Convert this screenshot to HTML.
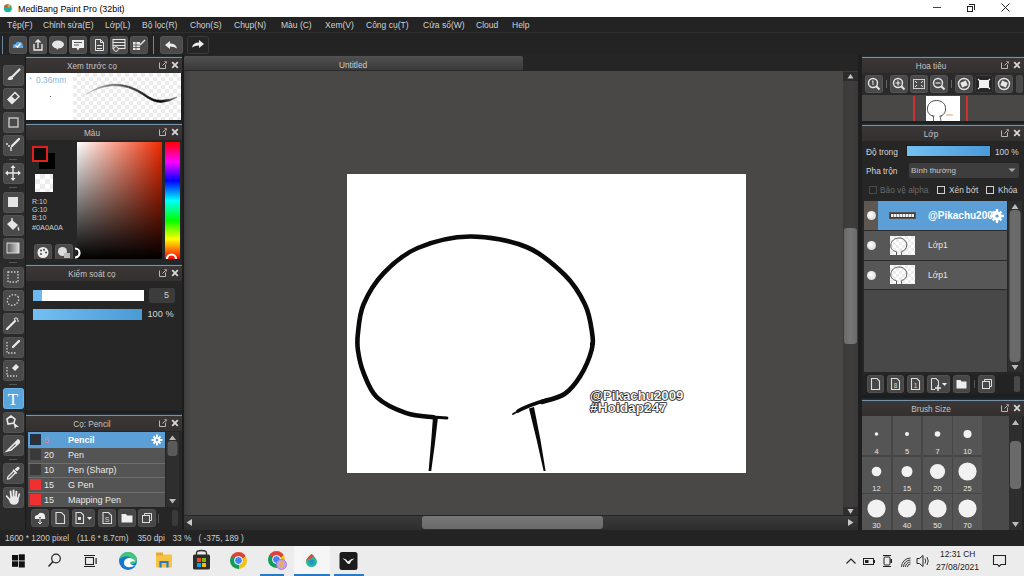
<!DOCTYPE html>
<html><head><meta charset="utf-8">
<style>
*{margin:0;padding:0;box-sizing:border-box}
html,body{width:1024px;height:576px;overflow:hidden;background:#232323;font-family:"Liberation Sans",sans-serif;position:relative}
.a{position:absolute}
.t{position:absolute;white-space:nowrap;line-height:1}
.tb{position:absolute;background:#484848;border-radius:2px}
.hdr{position:absolute;height:16px;background:linear-gradient(#3b3736,#34302f);border-top:1px solid #7893a8;box-shadow:0 -1px 0 #22303a,0 -2px 0 #1e262c;color:#c4c4c4;font-size:8.2px;text-align:center;line-height:17.5px;padding-right:24px}
.chk{background-color:#fff;background-image:linear-gradient(45deg,#ececec 25%,transparent 25%,transparent 75%,#ececec 75%),linear-gradient(45deg,#ececec 25%,transparent 25%,transparent 75%,#ececec 75%);background-size:8px 8px;background-position:0 0,4px 4px}
.btn{position:absolute;background:#4a4a4a;border-radius:3px}
</style></head><body>

<!-- title bar -->
<div class="a" style="left:0;top:0;width:1024px;height:17px;background:#fff"></div>
<svg class="a" style="left:3px;top:3px" width="10" height="10"><circle cx="4.8" cy="5.3" r="4" fill="#1fb58e"/><path d="M4.8 1.3 A4 4 0 0 0 0.9 4.5 L4.8 5.3Z" fill="#d85a3a"/><path d="M4.8 1.3 A4 4 0 0 1 8 3 L4.8 5.3Z" fill="#e9a443"/><circle cx="5.2" cy="6" r="1.8" fill="#2a9ad0" opacity="0.6"/></svg>
<div class="t" style="left:18px;top:5px;font-size:8.9px;color:#000">MediBang Paint Pro (32bit)</div>
<div class="a" style="left:933px;top:7px;width:8px;height:1px;background:#444"></div>
<div class="a" style="left:967px;top:6px;width:6px;height:6px;border:1px solid #222"></div>
<div class="a" style="left:969px;top:4px;width:6px;height:6px;border-top:1px solid #222;border-right:1px solid #222"></div>
<svg class="a" style="left:1001px;top:3px" width="9" height="9"><path d="M0.5 0.5L8.5 8.5M8.5 0.5L0.5 8.5" stroke="#222" stroke-width="1"/></svg>

<!-- menu bar -->
<div class="a" style="left:0;top:17px;width:1024px;height:16px;background:#232323;border-bottom:1px solid #2e2e2e"></div>
<div class="a" style="top:21px;font-size:8.5px;color:#d2d2d2;left:0;width:1024px;height:10px">
<span class="t" style="left:7px">Tệp(F)</span>
<span class="t" style="left:43px">Chỉnh sửa(E)</span>
<span class="t" style="left:105px">Lớp(L)</span>
<span class="t" style="left:142px">Bộ lọc(R)</span>
<span class="t" style="left:190px">Chọn(S)</span>
<span class="t" style="left:234px">Chụp(N)</span>
<span class="t" style="left:281px">Màu (C)</span>
<span class="t" style="left:325px">Xem(V)</span>
<span class="t" style="left:366px">Công cụ(T)</span>
<span class="t" style="left:423px">Cửa sổ(W)</span>
<span class="t" style="left:476px">Cloud</span>
<span class="t" style="left:512px">Help</span>
</div>

<!-- toolbar -->
<svg class="a" style="left:0;top:33px" width="220" height="22">
<rect x="2" y="3" width="1" height="18" fill="#6a88a0"/>
<g transform="translate(9,3)"><rect x="0.5" y="0.5" width="17" height="17" rx="2" fill="#4b4b4b" stroke="#555"/><path d="M4 12 Q3 8 6.5 8 Q7.5 5 10.5 6 Q14 6 13.5 9 Q15 10 14 12 Z" fill="#5ea8e6"/><path d="M6.5 9.5 L8.5 11 L11.5 7.5" stroke="#fff" stroke-width="1.3" fill="none"/></g>
<g transform="translate(29,3)"><rect x="0.5" y="0.5" width="17" height="17" rx="2" fill="#4b4b4b" stroke="#555"/><path d="M5 8 V14 H13 V8" fill="none" stroke="#eee" stroke-width="1.3"/><path d="M9 12 V4 M6.5 6.5 L9 4 L11.5 6.5" fill="none" stroke="#eee" stroke-width="1.3"/></g>
<g transform="translate(49,3)"><rect x="0.5" y="0.5" width="17" height="17" rx="2" fill="#4b4b4b" stroke="#555"/><ellipse cx="9" cy="8.5" rx="6" ry="4" fill="#e6e6e6"/><path d="M7 11 L8 14 L10 11Z" fill="#e6e6e6"/></g>
<g transform="translate(69,3)"><rect x="0.5" y="0.5" width="17" height="17" rx="2" fill="#4b4b4b" stroke="#555"/><rect x="3" y="4" width="12" height="8" fill="#eee"/><path d="M7.5 12 L9 14.5 L10.5 12Z" fill="#eee"/><path d="M5 6.5 H13 M5 9 H10" stroke="#555" stroke-width="1"/></g>
<g transform="translate(90,3)"><rect x="0.5" y="0.5" width="17" height="17" rx="2" fill="#4b4b4b" stroke="#555"/><path d="M5.5 3.5 H10.5 L13.5 6.5 V14.5 H5.5 Z M10.5 3.5 V6.5 H13.5" fill="none" stroke="#e6e6e6" stroke-width="1"/><path d="M7 9.5 H12 M7 12.5 H12" stroke="#e6e6e6" stroke-width="1"/></g>
<g transform="translate(110,3)"><rect x="0.5" y="0.5" width="17" height="17" rx="2" fill="#4b4b4b" stroke="#555"/><rect x="3" y="3.5" width="12" height="9" fill="none" stroke="#e6e6e6" stroke-width="1.1"/><path d="M3 6.5 H15 M3 9.5 H15" stroke="#e6e6e6" stroke-width="1"/><circle cx="6" cy="13" r="2.3" fill="#4b4b4b" stroke="#e6e6e6" stroke-width="1"/></g>
<g transform="translate(130,3)"><rect x="0.5" y="0.5" width="17" height="17" rx="2" fill="#4b4b4b" stroke="#555"/><path d="M3 6 H10 V14 H3Z" fill="#e6e6e6"/><path d="M3 9 H10 M3 11.5 H10 M6 6 V14" stroke="#4b4b4b" stroke-width="0.8"/><path d="M10 9 L15 4" stroke="#e6e6e6" stroke-width="1.4"/></g>
<rect x="153" y="3" width="1" height="18" fill="#6a88a0"/>
<g transform="translate(160,3)"><rect x="0.5" y="0.5" width="22" height="17" rx="2" fill="#4b4b4b" stroke="#555"/><path d="M5 9 L10 5 V7.5 Q16 7.5 17 12.5 Q14 10.5 10 10.5 V13 Z" fill="#eee"/></g>
<g transform="translate(187,3)"><rect x="0.5" y="0.5" width="21" height="17" rx="2" fill="#262626" stroke="#3c3c3c"/><path d="M17 8 L12 4 V6.5 Q6 6.5 5 11.5 Q8 9.5 12 9.5 V12 Z" fill="#eee"/></g>
</svg>

<!-- left tool column -->
<svg class="a" style="left:0;top:55px" width="26" height="475"><defs><linearGradient id="gr" x1="0" x2="1"><stop offset="0" stop-color="#555"/><stop offset="1" stop-color="#ddd"/></linearGradient></defs>
<rect x="0" y="0" width="26" height="475" fill="#2a2a2a"/><rect x="25" y="0" width="1" height="475" fill="#1a1a1a"/>
<g transform="translate(3,10)"><rect x="0.5" y="0.5" width="20" height="20" rx="2" fill="#4a4a4a" stroke="#535353" stroke-width="1"/><path d="M16.5 4.5 L9.5 11.5" stroke="#e8e8e8" stroke-width="2.2" stroke-linecap="round"/><path d="M4.5 14.5 Q5.5 11 8.5 11 Q10.5 12 10 14 Q8.5 15.8 4.5 14.5Z" fill="#e8e8e8"/></g>
<g transform="translate(3,33)"><rect x="0.5" y="0.5" width="20" height="20" rx="2" fill="#4a4a4a" stroke="#535353" stroke-width="1"/><path d="M12 4.5 L16 8.5 L9 15.5 L5 11.5 Z" fill="none" stroke="#e8e8e8" stroke-width="1.5"/><path d="M5 11.5 L8.5 8 L12.5 12 L9 15.5 Z" fill="#e8e8e8"/></g>
<g transform="translate(3,57)"><rect x="0.5" y="0.5" width="20" height="20" rx="2" fill="#4a4a4a" stroke="#535353" stroke-width="1"/><rect x="6" y="6" width="9" height="9" fill="none" stroke="#d0d0d0" stroke-width="1.3"/></g>
<g transform="translate(3,80)"><rect x="0.5" y="0.5" width="20" height="20" rx="2" fill="#4a4a4a" stroke="#535353" stroke-width="1"/><path d="M16 4 L9 11" stroke="#e8e8e8" stroke-width="2.4" stroke-linecap="round"/><circle cx="4" cy="9" r="1" fill="#ddd"/><circle cx="6" cy="11" r="1" fill="#ddd"/><circle cx="8" cy="13" r="1" fill="#ddd"/><circle cx="8" cy="15" r="1" fill="#ddd"/></g>
<g transform="translate(3,108)"><rect x="0.5" y="0.5" width="20" height="20" rx="2" fill="#4a4a4a" stroke="#535353" stroke-width="1"/><path d="M10 3 V17 M3 10 H17" stroke="#e8e8e8" stroke-width="1.4"/><path d="M10 2 L7.5 5 H12.5Z M10 18 L7.5 15 H12.5Z M2 10 L5 7.5 V12.5Z M18 10 L15 7.5 V12.5Z" fill="#e8e8e8"/></g>
<g transform="translate(3,137)"><rect x="0.5" y="0.5" width="20" height="20" rx="2" fill="#4a4a4a" stroke="#535353" stroke-width="1"/><rect x="5" y="5" width="10" height="10" fill="#e4e4e4"/></g>
<g transform="translate(3,160)"><rect x="0.5" y="0.5" width="20" height="20" rx="2" fill="#4a4a4a" stroke="#535353" stroke-width="1"/><path d="M4 9 L9 5 L15 10 L10 15 Z" fill="#e8e8e8"/><path d="M9 3 V7" stroke="#e8e8e8" stroke-width="1.4"/><path d="M15 11 Q17 14 16 16 Q14 15 15 11Z" fill="#e8e8e8"/></g>
<g transform="translate(3,183)"><rect x="0.5" y="0.5" width="20" height="20" rx="2" fill="#4a4a4a" stroke="#535353" stroke-width="1"/><rect x="4" y="5" width="12" height="10" fill="url(#gr)" stroke="#ddd" stroke-width="1"/></g>
<g transform="translate(3,212)"><rect x="0.5" y="0.5" width="20" height="20" rx="2" fill="#4a4a4a" stroke="#535353" stroke-width="1"/><rect x="5" y="5" width="10" height="10" fill="none" stroke="#cfcfcf" stroke-width="1.3" stroke-dasharray="1.5 1.5"/></g>
<g transform="translate(3,235)"><rect x="0.5" y="0.5" width="20" height="20" rx="2" fill="#4a4a4a" stroke="#535353" stroke-width="1"/><ellipse cx="10" cy="10" rx="6" ry="5" transform="rotate(-35 10 10)" fill="none" stroke="#cfcfcf" stroke-width="1.3" stroke-dasharray="1.5 1.5"/></g>
<g transform="translate(3,258)"><rect x="0.5" y="0.5" width="20" height="20" rx="2" fill="#4a4a4a" stroke="#535353" stroke-width="1"/><path d="M4 16 L12 8" stroke="#e8e8e8" stroke-width="2.2" stroke-linecap="round"/><path d="M13 4 V6 M15 5 L14 7 M16 8 H14 M11 5 L12 7" stroke="#e8e8e8" stroke-width="1"/></g>
<g transform="translate(3,282)"><rect x="0.5" y="0.5" width="20" height="20" rx="2" fill="#4a4a4a" stroke="#535353" stroke-width="1"/><path d="M16 4 L10 10" stroke="#e8e8e8" stroke-width="2.4" stroke-linecap="round"/><path d="M4 5 V16 H14" fill="none" stroke="#cfcfcf" stroke-width="1.3" stroke-dasharray="1.5 1.5"/></g>
<g transform="translate(3,305)"><rect x="0.5" y="0.5" width="20" height="20" rx="2" fill="#4a4a4a" stroke="#535353" stroke-width="1"/><path d="M9 8 L13 4 L16 7 L12 11 Z" fill="#e8e8e8"/><path d="M4 7 V16 H14" fill="none" stroke="#cfcfcf" stroke-width="1.3" stroke-dasharray="1.5 1.5"/></g>
<g transform="translate(3,333)"><rect x="0.5" y="0.5" width="20" height="20" rx="2" fill="#5aa5dc" stroke="#6cb4e8" stroke-width="1"/><text x="10" y="17" text-anchor="middle" font-family="Liberation Serif" font-size="17" fill="#fff">T</text></g>
<g transform="translate(3,357)"><rect x="0.5" y="0.5" width="20" height="20" rx="2" fill="#4a4a4a" stroke="#535353" stroke-width="1"/><path d="M4 7 L8 4 L12 7 L11 11 L5 12 Z" fill="none" stroke="#e8e8e8" stroke-width="1.6"/><path d="M10 10 L16 15 L13 15 L12 17 Z" fill="#e8e8e8"/></g>
<g transform="translate(3,380)"><rect x="0.5" y="0.5" width="20" height="20" rx="2" fill="#4a4a4a" stroke="#535353" stroke-width="1"/><path d="M4 16 L15 5 Q17 6 16 8 L8 15 Z" fill="none" stroke="#e8e8e8" stroke-width="1.6"/><path d="M12 8 L15 5 Q17 6 16 8 L13 11Z" fill="#e8e8e8"/></g>
<g transform="translate(3,408)"><rect x="0.5" y="0.5" width="20" height="20" rx="2" fill="#4a4a4a" stroke="#535353" stroke-width="1"/><path d="M4.5 16 L4.8 14 L11 7.8 L12.7 9.5 L6.5 15.7 Z" fill="none" stroke="#e8e8e8" stroke-width="1.3" stroke-linejoin="round"/><path d="M12.5 6.5 L14.5 4.5 Q16 4 16 5.5 L14 7.5Z" fill="#e8e8e8" stroke="#e8e8e8" stroke-width="1.2"/><path d="M10 6.8 L13.7 10.5" stroke="#e8e8e8" stroke-width="1.6"/></g>
<g transform="translate(3,432)"><rect x="0.5" y="0.5" width="20" height="20" rx="2" fill="#4a4a4a" stroke="#535353" stroke-width="1"/><g stroke="#e8e8e8" stroke-linecap="round" fill="none"><path d="M6.5 12.5 L3.8 9.2" stroke-width="1.8"/><path d="M8.2 10.5 L7.6 4.5" stroke-width="1.9"/><path d="M10.6 10 L10.6 3.5" stroke-width="1.9"/><path d="M13 10.5 L13.4 4.6" stroke-width="1.9"/><path d="M15 11.5 L16.3 7" stroke-width="1.7"/></g><ellipse cx="11" cy="13.5" rx="4.8" ry="4.2" fill="#e8e8e8"/></g>
<rect x="9" y="104" width="8" height="1" fill="#555"/>
<rect x="9" y="132" width="8" height="1" fill="#555"/>
<rect x="9" y="207" width="8" height="1" fill="#555"/>
<rect x="9" y="329" width="8" height="1" fill="#555"/>
<rect x="9" y="404" width="8" height="1" fill="#555"/>
</svg>

<!-- left panels -->
<div class="a" style="left:26px;top:55px;width:157px;height:475px;background:#232323"></div>
<div class="a" style="left:181px;top:55px;width:3px;height:475px;background:#1c1c1c"></div>
<!-- brush preview -->
<div class="hdr" style="left:26px;top:57px;width:156px">Xem trước cọ</div>
<svg class="a" style="left:158px;top:60px" width="22" height="10"><path d="M1.5 2.5 V8.5 H7.5 V4.5" fill="none" stroke="#b8b8b8" stroke-width="1"/><path d="M4.5 5.5 L7.5 2.5" stroke="#b8b8b8" stroke-width="1"/><path d="M6 1.2 H8.8 V4Z" fill="#c9a8a8"/><path d="M14.2 2.2 L19.8 7.8 M19.8 2.2 L14.2 7.8" stroke="#d8d8d8" stroke-width="1.8"/></svg>
<div class="a" style="left:26px;top:73px;width:47px;height:47px;background:#fff"></div>
<div class="t" style="left:29px;top:76px;font-size:7px;color:#8ab4dc">*</div><div class="t" style="left:36px;top:76px;font-size:8.4px;color:#8ab4dc">0.36mm</div>
<div class="a" style="left:50px;top:96px;width:1px;height:1px;background:#555"></div>
<div class="a chk" style="left:73px;top:73px;width:108px;height:47px"></div>
<svg class="a" style="left:73px;top:73px" width="108" height="47"><defs><linearGradient id="bp" x1="0" x2="1"><stop offset="0" stop-color="#bbb"/><stop offset="0.45" stop-color="#444"/><stop offset="0.8" stop-color="#000"/><stop offset="1" stop-color="#777"/></linearGradient></defs><path d="M13 21.5 Q26 13.5 40 12.6 Q56 12.4 70 22 Q80 29.5 88 29.5 Q97 29 104 24 Q97 27 88 27.3 Q80 27.5 71 20.5 Q56 10.5 40 11.2 Q26 12 13 21.5Z" fill="url(#bp)" stroke="url(#bp)" stroke-width="0.6"/></svg>
<div class="a" style="left:26px;top:120px;width:156px;height:4px;background:#1e1e1e"></div>

<!-- color -->
<div class="hdr" style="left:26px;top:124px;width:156px">Màu</div>
<svg class="a" style="left:158px;top:127px" width="22" height="10"><path d="M1.5 2.5 V8.5 H7.5 V4.5" fill="none" stroke="#b8b8b8" stroke-width="1"/><path d="M4.5 5.5 L7.5 2.5" stroke="#b8b8b8" stroke-width="1"/><path d="M6 1.2 H8.8 V4Z" fill="#c9a8a8"/><path d="M14.2 2.2 L19.8 7.8 M19.8 2.2 L14.2 7.8" stroke="#d8d8d8" stroke-width="1.8"/></svg>
<div class="a" style="left:26px;top:140px;width:156px;height:123px;background:#262626"></div>
<div class="a" style="left:39px;top:153px;width:16px;height:16px;background:#000"></div>
<div class="a" style="left:32px;top:146px;width:16px;height:16px;background:#0a0a0a;border:2px solid #e0201c"></div>
<div class="a chk" style="left:35px;top:174px;width:18px;height:18px;background-size:10px 10px;background-position:0 0,5px 5px"></div>
<div class="t" style="left:32px;top:198px;font-size:7px;color:#cfcfcf;line-height:8px">R:10<br>G:10<br>B:10</div>
<div class="t" style="left:32px;top:224px;font-size:7.3px;color:#cfcfcf">#0A0A0A</div>
<div class="a" style="left:77px;top:142px;width:85px;height:117px;background:linear-gradient(to bottom,rgba(0,0,0,0),#000),linear-gradient(to right,#fff,#f02a00)"></div>
<div class="a" style="left:165px;top:142px;width:15px;height:117px;background:linear-gradient(#ff0000 0%,#ff00ff 17%,#0000ff 33%,#00ffff 50%,#00ff00 67%,#ffff00 83%,#ff0000 100%)"></div>
<svg class="a" style="left:72px;top:246px" width="110" height="14"><path d="M3 2.5 A4.5 4.5 0 0 1 3 11.5" fill="none" stroke="#fff" stroke-width="2.2"/><path d="M95 13 A4.5 4.5 0 0 1 104 13" fill="none" stroke="#fff" stroke-width="2.2"/></svg>
<svg class="a" style="left:33.5px;top:243.5px" width="40" height="18">
<rect x="0.5" y="0.5" width="17" height="16" rx="2" fill="#4a4a4a" stroke="#555"/><circle cx="9" cy="8.5" r="5.5" fill="#eee"/><circle cx="7" cy="6.5" r="1" fill="#4a4a4a"/><circle cx="10" cy="5.8" r="1" fill="#4a4a4a"/><circle cx="12" cy="8.5" r="1" fill="#4a4a4a"/><circle cx="7" cy="10" r="1" fill="#4a4a4a"/>
<g transform="translate(21,0)"><rect x="0.5" y="0.5" width="17" height="16" rx="2" fill="#4a4a4a" stroke="#555"/><circle cx="7.5" cy="7.5" r="4.5" fill="#ddd"/><rect x="9" y="9" width="6" height="5" fill="#bbb"/></g>
</svg>
<div class="a" style="left:26px;top:259px;width:156px;height:6px;background:#262626"></div>

<!-- brush control -->
<div class="hdr" style="left:26px;top:265px;width:156px">Kiểm soát cọ</div>
<svg class="a" style="left:158px;top:268px" width="22" height="10"><path d="M1.5 2.5 V8.5 H7.5 V4.5" fill="none" stroke="#b8b8b8" stroke-width="1"/><path d="M4.5 5.5 L7.5 2.5" stroke="#b8b8b8" stroke-width="1"/><path d="M6 1.2 H8.8 V4Z" fill="#c9a8a8"/><path d="M14.2 2.2 L19.8 7.8 M19.8 2.2 L14.2 7.8" stroke="#d8d8d8" stroke-width="1.8"/></svg>
<div class="a" style="left:26px;top:281px;width:156px;height:130px;background:#262626"></div>
<div class="a" style="left:33px;top:290px;width:111px;height:11px;background:#fff"></div>
<div class="a" style="left:33px;top:290px;width:9px;height:11px;background:#6fb8ee"></div>
<div class="a" style="left:149px;top:288px;width:26px;height:15px;background:#3c3c3c;border-radius:2px"></div>
<div class="t" style="left:164px;top:291px;font-size:9px;color:#cfcfcf">5</div>
<div class="a" style="left:33px;top:309px;width:109px;height:11px;background:linear-gradient(to right,#72bff2,#4a9ad6)"></div>
<div class="t" style="left:147.5px;top:309.5px;font-size:9.2px;color:#d6d6d6">100 %</div>
<div class="a" style="left:26px;top:411px;width:156px;height:4px;background:#1e1e1e"></div>

<!-- brush list -->
<div class="hdr" style="left:26px;top:415px;width:156px">Cọ: Pencil</div>
<svg class="a" style="left:158px;top:418px" width="22" height="10"><path d="M1.5 2.5 V8.5 H7.5 V4.5" fill="none" stroke="#b8b8b8" stroke-width="1"/><path d="M4.5 5.5 L7.5 2.5" stroke="#b8b8b8" stroke-width="1"/><path d="M6 1.2 H8.8 V4Z" fill="#c9a8a8"/><path d="M14.2 2.2 L19.8 7.8 M19.8 2.2 L14.2 7.8" stroke="#d8d8d8" stroke-width="1.8"/></svg>
<div class="a" style="left:26px;top:431px;width:156px;height:99px;background:#262626"></div>
<div class="a" style="left:28px;top:432px;width:137px;height:75px;background:#545454"></div>
<div class="a" style="left:28px;top:432px;width:137px;height:16px;background:#5b9fd6"></div>
<div class="a" style="left:28px;top:463px;width:137px;height:1px;background:#6e6e6e"></div>
<div class="a" style="left:28px;top:477px;width:137px;height:1px;background:#6e6e6e"></div>
<div class="a" style="left:28px;top:492px;width:137px;height:1px;background:#6e6e6e"></div>
<div class="a" style="left:30px;top:434px;width:11px;height:11px;background:#303030;border:1px solid #1a3550"></div>
<div class="a" style="left:30px;top:449px;width:11px;height:11px;background:#3a3a3a"></div>
<div class="a" style="left:30px;top:464px;width:11px;height:11px;background:#3a3a3a"></div>
<div class="a" style="left:30px;top:479px;width:11px;height:11px;background:#f03030"></div>
<div class="a" style="left:30px;top:494px;width:11px;height:11px;background:#f03030"></div>
<div class="a" style="top:435.5px;left:0;width:182px;font-size:9px;color:#e8e8e8;height:70px">
<span class="t" style="left:44px;top:0;color:#e88080">5</span><span class="t" style="left:68px;top:0;font-weight:bold;color:#fff">Pencil</span>
<span class="t" style="left:44px;top:15px">20</span><span class="t" style="left:68px;top:15px">Pen</span>
<span class="t" style="left:44px;top:30px">10</span><span class="t" style="left:68px;top:30px">Pen (Sharp)</span>
<span class="t" style="left:44px;top:45px">15</span><span class="t" style="left:68px;top:45px">G Pen</span>
<span class="t" style="left:44px;top:60px">15</span><span class="t" style="left:68px;top:60px">Mapping Pen</span>
</div>
<svg class="a" style="left:151px;top:434px" width="12" height="12"><g fill="#fff"><circle cx="6" cy="6" r="3.2"/><path d="M5 0.5H7L7 3H5Z M5 9H7V11.5H5Z M0.5 5V7H3V5Z M9 5V7H11.5V5Z M1.8 3.2L3.2 1.8L4.8 3.4L3.4 4.8Z M7.2 8.6L8.6 7.2L10.2 8.8L8.8 10.2Z M1.8 8.8L3.4 7.2L4.8 8.6L3.2 10.2Z M7.2 3.4L8.8 1.8L10.2 3.2L8.6 4.8Z"/></g><circle cx="6" cy="6" r="1.3" fill="#5b9fd6"/></svg>
<div class="a" style="left:166px;top:432px;width:13px;height:75px;background:#2e2e2e"></div>
<svg class="a" style="left:166px;top:432px" width="13" height="75"><path d="M3 8 L6.5 3.5 L10 8Z" fill="#bbb"/><rect x="1.5" y="9" width="10" height="15" rx="3" fill="#5a5a5a"/><path d="M3 67 L6.5 71.5 L10 67Z" fill="#bbb"/></svg>
<svg class="a" style="left:28px;top:508px" width="154" height="20">
<g transform="translate(3,1)"><rect x="0.5" y="0.5" width="17" height="17" rx="2" fill="#474747" stroke="#505050"/><path d="M4 10 Q3 6 7 6 Q8 3 11 4 Q14 4 14 8 Q15 10 13 10Z" fill="#eee"/><path d="M9 8 V15 M6.5 12.5 L9 15 L11.5 12.5" stroke="#474747" stroke-width="1.5" fill="none"/><path d="M9 9 V15 M7 13 L9 15 L11 13" stroke="#eee" stroke-width="1" fill="none"/></g>
<g transform="translate(23,1)"><rect x="0.5" y="0.5" width="17" height="17" rx="2" fill="#474747" stroke="#505050"/><path d="M5 3.5 H10.5 L13.5 6.5 V14.5 H5Z" fill="none" stroke="#ddd" stroke-width="1.1"/></g>
<g transform="translate(44,1)"><rect x="0.5" y="0.5" width="22" height="17" rx="2" fill="#474747" stroke="#505050"/><path d="M4 3.5 H9 L11.5 6 V14.5 H4Z" fill="none" stroke="#ddd" stroke-width="1.1"/><rect x="6" y="8" width="3" height="3" fill="#ddd"/><path d="M15 8 L17.5 11 L20 8Z" fill="#eee"/></g>
<g transform="translate(70,1)"><rect x="0.5" y="0.5" width="17" height="17" rx="2" fill="#474747" stroke="#505050"/><path d="M5 3.5 H10.5 L13.5 6.5 V14.5 H5Z" fill="none" stroke="#ddd" stroke-width="1.1"/><text x="9" y="12.5" font-size="7" fill="#ddd" text-anchor="middle" font-family="Liberation Sans">S</text></g>
<g transform="translate(90,1)"><rect x="0.5" y="0.5" width="17" height="17" rx="2" fill="#474747" stroke="#505050"/><path d="M3.5 5 H8 L9 6.5 H14.5 V13.5 H3.5Z" fill="#eee"/></g>
<g transform="translate(110,1)"><rect x="0.5" y="0.5" width="17" height="17" rx="2" fill="#474747" stroke="#505050"/><rect x="4.5" y="6.5" width="7" height="7" fill="none" stroke="#ddd"/><path d="M6.5 6.5 V4.5 H13.5 V11.5 H11.5" fill="none" stroke="#ddd"/></g>
<rect x="130" y="6" width="1" height="9" fill="#555"/>
<rect x="144" y="2" width="6" height="16" rx="2" fill="#3a3a3a"/>
</svg>

<!-- canvas column -->
<div class="a" style="left:184px;top:55px;width:678px;height:16px;background:#252525"></div>
<div class="a" style="left:184px;top:56px;width:339px;height:15px;background:linear-gradient(#515151,#434343 60%,#3a3a3a);border-radius:2px 2px 0 0;border-bottom:1px solid #2a2a2a"></div>
<div class="t" style="left:339px;top:61px;font-size:8.3px;color:#cfcfcf">Untitled</div>
<div class="a" style="left:184px;top:71px;width:659px;height:444px;background:#4a4846"></div>
<div class="a" style="left:184px;top:71px;width:7px;height:444px;background:linear-gradient(to right,#3c3c3c,#444 60%,#484746)"></div>
<div class="a" style="left:843px;top:71px;width:15px;height:444px;background:linear-gradient(to right,#3c3a39,#403e3d 50%,#3a3838)"></div>
<div class="a" style="left:844px;top:228px;width:13px;height:116px;background:linear-gradient(to right,#6a6a6a,#767676 50%,#6a6a6a);border-radius:3px"></div>
<svg class="a" style="left:843px;top:71px" width="15" height="444"><rect x="0" y="1" width="15" height="9" fill="#2c2c2c"/><path d="M4.5 7.5 L7.5 3 L10.5 7.5Z" fill="#c8c8c8"/><rect x="0" y="436" width="15" height="8" fill="#2e2e2e"/><path d="M4.5 438 L7.5 443 L10.5 438Z" fill="#c8c8c8"/></svg>
<div class="a" style="left:184px;top:515px;width:674px;height:15px;background:linear-gradient(#3a3a3a,#2d2d2d);border-top:1px solid #262626"></div>
<div class="a" style="left:422px;top:516px;width:181px;height:13px;background:linear-gradient(#777,#6a6a6a);border-radius:3px"></div>
<svg class="a" style="left:184px;top:515px" width="674" height="15"><path d="M8 4 L2.5 7.5 L8 11Z" fill="#c8c8c8"/><path d="M664 4 L669.5 7.5 L664 11Z" fill="#c8c8c8"/></svg>
<div class="a" style="left:347px;top:174px;width:399px;height:299px;background:#fff"></div>
<svg class="a" style="left:347px;top:174px" width="399" height="299" viewBox="347 174 399 299">
<g fill="none" stroke="#0a0a0a" stroke-linecap="round">
<path d="M433.5 417.3 C429.0 416.6 415.8 416.5 406.4 413.2 C397.0 409.9 384.1 404.2 377 397.4 C369.9 390.6 366.7 380.5 363.5 372.6 C360.3 364.7 358.8 356.5 357.9 350 C357.0 343.5 357.0 341.4 357.9 333.8 C358.8 326.2 359.2 314.6 363.5 304.5 C367.8 294.4 374.9 282.3 383.9 272.9 C392.9 263.5 403.3 254.1 417.7 248 C432.1 241.9 451.9 236.7 470 236.5 C488.1 236.3 510.6 240.6 526.4 247 C542.2 253.4 555.0 265.4 564.8 275 C574.6 284.6 580.5 295.1 585 304.5 C589.5 313.9 590.8 324.0 591.9 331.6 C593.0 339.2 593.5 342.6 591.6 350 C589.7 357.4 584.8 368.7 580.3 376 C575.8 383.3 570.9 389.7 564.5 394 C558.1 398.3 545.7 400.7 541.9 402" stroke-width="4.6"/>
<path d="M425 416.5 L447 418" stroke-width="2.8"/>
<rect x="590" y="342.5" width="3.4" height="8" fill="#0a0a0a" stroke="none"/>
<path d="M548 399.5 C536 403 525 407 518 411" stroke-width="3.6"/><path d="M522 409 L513 414" stroke-width="1.8"/>
<path d="M433 417 L438 417 Q435 445 431.2 471 L428.6 471 Q431 445 433 417Z" fill="#0a0a0a" stroke="none"/>
<path d="M529 408.5 L534 407 Q541 440 545.6 471 L543.6 471 Q537 440 529 408.5Z" fill="#0a0a0a" stroke="none"/>
</g>
</svg>
<svg class="a" style="left:584.5px;top:384px" width="110" height="34"><g font-family="Liberation Sans" font-weight="bold" font-size="13" fill="#f6f6f6" stroke="#1a1a1a" stroke-width="1.5" paint-order="stroke fill" stroke-linejoin="round"><text x="5" y="16" textLength="93.5" lengthAdjust="spacingAndGlyphs">@Pikachu2009</text><text x="5" y="28" textLength="77" lengthAdjust="spacingAndGlyphs">#Hoidap247</text></g></svg>

<!-- right panels -->
<div class="a" style="left:858px;top:55px;width:4px;height:475px;background:#1e1e1e"></div>
<div class="a" style="left:862px;top:55px;width:162px;height:475px;background:#232323"></div>
<!-- navigator -->
<div class="hdr" style="left:862px;top:57px;width:162px">Hoa tiêu</div>
<svg class="a" style="left:1000px;top:60px" width="22" height="10"><path d="M1.5 2.5 V8.5 H7.5 V4.5" fill="none" stroke="#b8b8b8" stroke-width="1"/><path d="M4.5 5.5 L7.5 2.5" stroke="#b8b8b8" stroke-width="1"/><path d="M6 1.2 H8.8 V4Z" fill="#c9a8a8"/><path d="M14.2 2.2 L19.8 7.8 M19.8 2.2 L14.2 7.8" stroke="#d8d8d8" stroke-width="1.8"/></svg>
<div class="a" style="left:862px;top:73px;width:162px;height:22px;background:#2a2a2a"></div>
<svg class="a" style="left:862px;top:74px" width="162" height="20">
<g transform="translate(3,1)"><rect x="0.5" y="0.5" width="17" height="17" rx="2" fill="#4a4a4a" stroke="#555"/><circle cx="8" cy="8" r="4.5" fill="none" stroke="#e6e6e6" stroke-width="1.4"/><path d="M11.3 11.3 L14.5 14.5" stroke="#e6e6e6" stroke-width="2"/><path d="M7 6.5 L8 5.8 V10" stroke="#e6e6e6" stroke-width="1" fill="none"/></g>
<rect x="24" y="6" width="1" height="8" fill="#666"/>
<g transform="translate(28,1)"><rect x="0.5" y="0.5" width="17" height="17" rx="2" fill="#4a4a4a" stroke="#555"/><circle cx="8" cy="8" r="4.5" fill="none" stroke="#e6e6e6" stroke-width="1.4"/><path d="M11.3 11.3 L14.5 14.5" stroke="#e6e6e6" stroke-width="2"/><path d="M5.5 8 H10.5 M8 5.5 V10.5" stroke="#e6e6e6" stroke-width="1.2"/></g>
<g transform="translate(48,1)"><rect x="0.5" y="0.5" width="17" height="17" rx="2" fill="#4a4a4a" stroke="#555"/><rect x="3.5" y="4.5" width="11" height="9" fill="none" stroke="#cfcfcf" stroke-width="1"/><path d="M5 6 L7 8 M13 6 L11 8 M5 12 L7 10 M13 12 L11 10" stroke="#e6e6e6" stroke-width="1"/></g>
<g transform="translate(68,1)"><rect x="0.5" y="0.5" width="17" height="17" rx="2" fill="#4a4a4a" stroke="#555"/><circle cx="8" cy="8" r="4.5" fill="none" stroke="#e6e6e6" stroke-width="1.4"/><path d="M11.3 11.3 L14.5 14.5" stroke="#e6e6e6" stroke-width="2"/><path d="M5.5 8 H10.5" stroke="#e6e6e6" stroke-width="1.2"/></g>
<rect x="89" y="6" width="1" height="8" fill="#666"/>
<g transform="translate(93,1)"><rect x="0.5" y="0.5" width="17" height="17" rx="2" fill="#4a4a4a" stroke="#555"/><circle cx="9" cy="9" r="5.5" fill="none" stroke="#e6e6e6" stroke-width="1.4"/><rect x="6" y="6.5" width="6" height="5" transform="rotate(-20 9 9)" fill="#e6e6e6"/></g>
<g transform="translate(113,1)"><rect x="0.5" y="0.5" width="17" height="17" rx="2" fill="#262626" stroke="#3a3a3a"/><rect x="4" y="5" width="10" height="8" fill="#f0f0f0"/><path d="M3 4 L5.5 6.5 M15 4 L12.5 6.5 M3 14 L5.5 11.5 M15 14 L12.5 11.5" stroke="#f0f0f0" stroke-width="1.2"/></g>
<g transform="translate(133,1)"><rect x="0.5" y="0.5" width="17" height="17" rx="2" fill="#4a4a4a" stroke="#555"/><circle cx="9" cy="9" r="5.5" fill="none" stroke="#e6e6e6" stroke-width="1.4"/><rect x="6" y="6.5" width="6" height="5" transform="rotate(20 9 9)" fill="#e6e6e6"/></g>
<rect x="154" y="1" width="7" height="18" rx="2" fill="#4a4a4a"/>
</svg>
<div class="a" style="left:862px;top:95px;width:162px;height:26px;background:#4a4846"></div>
<div class="a" style="left:913px;top:96px;width:2px;height:25px;background:#d03030"></div>
<div class="a" style="left:966px;top:96px;width:2px;height:25px;background:#d03030"></div>
<div class="a" style="left:926px;top:96px;width:34px;height:25px;background:#fff"></div>
<svg class="a" style="left:926px;top:96px" width="34" height="25"><path d="M7 20 C2.5 19 1 15 1.5 12 C2 7 6 4.5 10.5 4.5 C15 4.5 19 7 19.5 11.5 C20 15 18.5 18.5 15 20" fill="none" stroke="#333" stroke-width="0.9"/><path d="M6 20 H8.5 M13.5 20 H16 M7.5 20 V25 M14 20 L15 25" stroke="#444" stroke-width="0.8"/><path d="M20 19 H27" stroke="#d9b48a" stroke-width="1.2"/></svg>
<div class="a" style="left:862px;top:121px;width:162px;height:4px;background:#1e1e1e"></div>

<!-- layer -->
<div class="hdr" style="left:862px;top:125px;width:162px">Lớp</div>
<svg class="a" style="left:1000px;top:128px" width="22" height="10"><path d="M1.5 2.5 V8.5 H7.5 V4.5" fill="none" stroke="#b8b8b8" stroke-width="1"/><path d="M4.5 5.5 L7.5 2.5" stroke="#b8b8b8" stroke-width="1"/><path d="M6 1.2 H8.8 V4Z" fill="#c9a8a8"/><path d="M14.2 2.2 L19.8 7.8 M19.8 2.2 L14.2 7.8" stroke="#d8d8d8" stroke-width="1.8"/></svg>
<div class="a" style="left:862px;top:141px;width:162px;height:60px;background:#262626"></div>
<div class="t" style="left:866px;top:148px;font-size:8.3px;color:#d4d4d4">Độ trong</div>
<div class="a" style="left:906px;top:145px;width:85px;height:12px;background:linear-gradient(to right,#74c0f2,#4a9ad8);border:1px solid #1e1e1e"></div>
<div class="t" style="left:995px;top:148px;font-size:8.3px;color:#d4d4d4">100 %</div>
<div class="t" style="left:866px;top:167px;font-size:8.3px;color:#d4d4d4">Pha trộn</div>
<div class="a" style="left:909px;top:163px;width:110px;height:15px;background:#3e3e3e;border-radius:2px"></div>
<div class="t" style="left:911px;top:167px;font-size:8px;color:#c8c8c8">Bình thường</div>
<svg class="a" style="left:1008px;top:168px" width="8" height="5"><path d="M0.5 0.5 L4 4 L7.5 0.5Z" fill="#aaa"/></svg>
<div class="a" style="left:869px;top:186px;width:8px;height:8px;border:1px solid #4a4a4a"></div>
<div class="t" style="left:880px;top:186px;font-size:8.3px;color:#6a6a6a">Bảo vệ alpha</div>
<div class="a" style="left:937px;top:186px;width:8px;height:8px;border:1px solid #d0d0d0"></div>
<div class="t" style="left:949px;top:186px;font-size:8.3px;color:#d4d4d4">Xén bớt</div>
<div class="a" style="left:986px;top:186px;width:8px;height:8px;border:1px solid #d0d0d0"></div>
<div class="t" style="left:998px;top:186px;font-size:8.3px;color:#d4d4d4">Khóa</div>
<div class="a" style="left:862px;top:199px;width:162px;height:176px;background:#262626"></div>
<div class="a" style="left:864px;top:201px;width:143px;height:171px;background:#484848"></div>
<div class="a" style="left:864px;top:201px;width:143px;height:29px;background:#5b9fd6"></div>
<div class="a" style="left:864px;top:201px;width:14px;height:29px;background:#5f5752"></div>
<div class="a" style="left:864px;top:230px;width:143px;height:1px;background:#2a2a2a"></div>
<div class="a" style="left:864px;top:231px;width:143px;height:29px;background:#575757"></div>
<div class="a" style="left:864px;top:260px;width:143px;height:1px;background:#2a2a2a"></div>
<div class="a" style="left:864px;top:261px;width:143px;height:28px;background:#575757"></div>
<div class="a" style="left:864px;top:289px;width:143px;height:1px;background:#2a2a2a"></div>
<div class="a" style="left:867px;top:211px;width:9px;height:9px;border-radius:50%;background:radial-gradient(circle at 40% 40%,#fff,#cfcfcf)"></div>
<div class="a" style="left:867px;top:241px;width:9px;height:9px;border-radius:50%;background:radial-gradient(circle at 40% 40%,#fff,#cfcfcf)"></div>
<div class="a" style="left:867px;top:271px;width:9px;height:9px;border-radius:50%;background:radial-gradient(circle at 40% 40%,#fff,#cfcfcf)"></div>
<div class="a" style="left:889px;top:212px;width:27px;height:7px;background:#3a3a3a;border:1px solid #555"></div><div class="a" style="left:891px;top:214px;width:23px;height:3px;background:repeating-linear-gradient(to right,#eee 0 2px,#999 2px 3px)"></div>
<div class="a chk" style="left:890px;top:236px;width:25px;height:19px;background-size:6px 6px;background-position:0 0,3px 3px"></div>
<div class="a chk" style="left:890px;top:265px;width:25px;height:19px;background-size:6px 6px;background-position:0 0,3px 3px"></div>
<svg class="a" style="left:890px;top:236px" width="25" height="19"><path d="M6 15.5 C2 15 0.5 12 0.8 9 C1.2 5 4.5 2 9 2 C13.5 2 16.8 5 16.8 9 C16.8 12.5 15 14.5 11.5 15.5 M6.5 15.5 V19 M11 15.5 L11.8 19" fill="none" stroke="#444" stroke-width="0.9"/></svg>
<svg class="a" style="left:890px;top:265px" width="25" height="19"><path d="M6 15.5 C2 15 0.5 12 0.8 9 C1.2 5 4.5 2 9 2 C13.5 2 16.8 5 16.8 9 C16.8 12.5 15 14.5 11.5 15.5 M6.5 15.5 V19 M11 15.5 L11.8 19" fill="none" stroke="#444" stroke-width="0.9"/></svg>
<div class="t" style="left:928px;top:211px;font-size:10px;font-weight:bold;color:#fff">@Pikachu2009</div>
<svg class="a" style="left:989px;top:208px" width="16" height="16"><g fill="#fff"><circle cx="8" cy="8" r="4.5"/><path d="M6.8 1H9.2V4H6.8Z M6.8 12H9.2V15H6.8Z M1 6.8V9.2H4V6.8Z M12 6.8V9.2H15V6.8Z M2.7 4.4L4.4 2.7L6.5 4.8L4.8 6.5Z M9.5 11.2L11.2 9.5L13.3 11.6L11.6 13.3Z M2.7 11.6L4.8 9.5L6.5 11.2L4.4 13.3Z M9.5 4.8L11.6 2.7L13.3 4.4L11.2 6.5Z"/></g><circle cx="8" cy="8" r="1.6" fill="#5b9fd6"/></svg>
<div class="t" style="left:928px;top:241px;font-size:8.5px;color:#e4e4e4">Lớp1</div>
<div class="t" style="left:928px;top:271px;font-size:8.5px;color:#e4e4e4">Lớp1</div>
<div class="a" style="left:1008px;top:201px;width:14px;height:171px;background:#2e2e2e"></div>
<svg class="a" style="left:1008px;top:201px" width="14" height="171"><path d="M3.5 8 L7 3 L10.5 8Z" fill="#bbb"/><rect x="1.5" y="9" width="11" height="152" rx="4" fill="#6a6a6a"/><path d="M3.5 164 L7 169 L10.5 164Z" fill="#bbb"/></svg>
<svg class="a" style="left:862px;top:373px" width="162" height="21">
<g transform="translate(5,2)"><rect x="0.5" y="0.5" width="16" height="17" rx="2" fill="#474747" stroke="#505050"/><path d="M4.5 3.5 H10 L12.5 6 V14.5 H4.5Z" fill="none" stroke="#ddd" stroke-width="1.1"/></g>
<g transform="translate(25,2)"><rect x="0.5" y="0.5" width="16" height="17" rx="2" fill="#474747" stroke="#505050"/><path d="M4.5 3.5 H10 L12.5 6 V14.5 H4.5Z" fill="none" stroke="#ddd" stroke-width="1.1"/><text x="8.5" y="12.5" font-size="6.5" fill="#ddd" text-anchor="middle" font-family="Liberation Sans">8</text></g>
<g transform="translate(45,2)"><rect x="0.5" y="0.5" width="16" height="17" rx="2" fill="#474747" stroke="#505050"/><path d="M4.5 3.5 H10 L12.5 6 V14.5 H4.5Z" fill="none" stroke="#ddd" stroke-width="1.1"/><text x="8.5" y="12.5" font-size="6.5" fill="#ddd" text-anchor="middle" font-family="Liberation Sans">1</text></g>
<g transform="translate(65,2)"><rect x="0.5" y="0.5" width="22" height="17" rx="2" fill="#474747" stroke="#505050"/><path d="M4.5 3.5 H9 L11.5 6 V11 M8 14.5 H4.5 V3.5" fill="none" stroke="#ddd" stroke-width="1.1"/><path d="M11 10 V16 M8 13 H14" stroke="#eee" stroke-width="1.4"/><path d="M15 8 L17.5 11 L20 8Z" fill="#eee"/></g>
<g transform="translate(91,2)"><rect x="0.5" y="0.5" width="16" height="17" rx="2" fill="#474747" stroke="#505050"/><path d="M3.5 5 H7.5 L8.5 6.5 H13.5 V13.5 H3.5Z" fill="#eee"/></g>
<rect x="112" y="7" width="1" height="8" fill="#555"/>
<g transform="translate(116,2)"><rect x="0.5" y="0.5" width="16" height="17" rx="2" fill="#474747" stroke="#505050"/><rect x="4.5" y="6.5" width="7" height="7" fill="none" stroke="#ddd"/><path d="M6.5 6.5 V4.5 H13.5 V11.5 H11.5" fill="none" stroke="#ddd"/></g>
<rect x="152" y="3" width="6" height="16" rx="2" fill="#484848"/>
</svg>
<div class="a" style="left:862px;top:394px;width:162px;height:6px;background:#1e1e1e"></div>

<!-- brush size -->
<div class="hdr" style="left:862px;top:400px;width:162px">Brush Size</div>
<svg class="a" style="left:1000px;top:403px" width="22" height="10"><path d="M1.5 2.5 V8.5 H7.5 V4.5" fill="none" stroke="#b8b8b8" stroke-width="1"/><path d="M4.5 5.5 L7.5 2.5" stroke="#b8b8b8" stroke-width="1"/><path d="M6 1.2 H8.8 V4Z" fill="#c9a8a8"/><path d="M14.2 2.2 L19.8 7.8 M19.8 2.2 L14.2 7.8" stroke="#d8d8d8" stroke-width="1.8"/></svg>
<div class="a" style="left:862px;top:416px;width:147px;height:114px;background:#4a4a4a"></div>
<div class="a" style="left:862px;top:416px;width:120px;height:114px;background:#464646"></div>
<div class="a" style="left:862px;top:416px;width:29px;height:39px;background:#555"></div>
<div class="t" style="left:862px;width:29px;text-align:center;top:447.5px;font-size:7.5px;color:#e8e8e8">4</div>
<div class="a" style="left:893px;top:416px;width:28px;height:39px;background:#555"></div>
<div class="t" style="left:893px;width:28px;text-align:center;top:447.5px;font-size:7.5px;color:#e8e8e8">5</div>
<div class="a" style="left:923px;top:416px;width:29px;height:39px;background:#555"></div>
<div class="t" style="left:923px;width:29px;text-align:center;top:447.5px;font-size:7.5px;color:#e8e8e8">7</div>
<div class="a" style="left:953px;top:416px;width:29px;height:39px;background:#555"></div>
<div class="t" style="left:953px;width:29px;text-align:center;top:447.5px;font-size:7.5px;color:#e8e8e8">10</div>
<div class="a" style="left:862px;top:457px;width:29px;height:36px;background:#555"></div>
<div class="t" style="left:862px;width:29px;text-align:center;top:484.5px;font-size:7.5px;color:#e8e8e8">12</div>
<div class="a" style="left:893px;top:457px;width:28px;height:36px;background:#555"></div>
<div class="t" style="left:893px;width:28px;text-align:center;top:484.5px;font-size:7.5px;color:#e8e8e8">15</div>
<div class="a" style="left:923px;top:457px;width:29px;height:36px;background:#555"></div>
<div class="t" style="left:923px;width:29px;text-align:center;top:484.5px;font-size:7.5px;color:#e8e8e8">20</div>
<div class="a" style="left:953px;top:457px;width:29px;height:36px;background:#555"></div>
<div class="t" style="left:953px;width:29px;text-align:center;top:484.5px;font-size:7.5px;color:#e8e8e8">25</div>
<div class="a" style="left:862px;top:494px;width:29px;height:36px;background:#555"></div>
<div class="t" style="left:862px;width:29px;text-align:center;top:522px;font-size:7.5px;color:#e8e8e8">30</div>
<div class="a" style="left:893px;top:494px;width:28px;height:36px;background:#555"></div>
<div class="t" style="left:893px;width:28px;text-align:center;top:522px;font-size:7.5px;color:#e8e8e8">40</div>
<div class="a" style="left:923px;top:494px;width:29px;height:36px;background:#555"></div>
<div class="t" style="left:923px;width:29px;text-align:center;top:522px;font-size:7.5px;color:#e8e8e8">50</div>
<div class="a" style="left:953px;top:494px;width:29px;height:36px;background:#555"></div>
<div class="t" style="left:953px;width:29px;text-align:center;top:522px;font-size:7.5px;color:#e8e8e8">70</div>
<svg class="a" style="left:862px;top:416px" width="120" height="114"><circle cx="14.5" cy="18" r="1.8" fill="#f2f2f2"/><circle cx="45.0" cy="18" r="2.0" fill="#f2f2f2"/><circle cx="75.5" cy="18" r="2.8" fill="#f2f2f2"/><circle cx="105.5" cy="18" r="4.0" fill="#f2f2f2"/><circle cx="14.5" cy="55.5" r="4.8" fill="#f2f2f2"/><circle cx="45.0" cy="55.5" r="5.5" fill="#f2f2f2"/><circle cx="75.5" cy="55.5" r="7.6" fill="#f2f2f2"/><circle cx="105.5" cy="55.5" r="9.1" fill="#f2f2f2"/><circle cx="14.5" cy="92.5" r="9.1" fill="#f2f2f2"/><circle cx="45.0" cy="92.5" r="9.1" fill="#f2f2f2"/><circle cx="75.5" cy="92.5" r="9.1" fill="#f2f2f2"/><circle cx="105.5" cy="92.5" r="9.1" fill="#f2f2f2"/></svg>
<div class="a" style="left:1009px;top:416px;width:13px;height:114px;background:#2e2e2e"></div>
<svg class="a" style="left:1009px;top:416px" width="13" height="114"><path d="M3 9 L6.5 4 L10 9Z" fill="#bbb"/><rect x="1" y="25" width="11" height="48" rx="4" fill="#6a6a6a"/><path d="M3 106 L6.5 111 L10 106Z" fill="#bbb"/></svg>

<!-- status bar -->
<div class="a" style="left:0;top:530px;width:1024px;height:16px;background:#232323"></div>
<div class="a" style="left:0;top:534px;width:260px;height:10px;font-size:8.3px;color:#cdcdcd">
<span class="t" style="left:5px">1600 * 1200 pixel</span><span class="t" style="left:77px">(11.6 * 8.7cm)</span><span class="t" style="left:137.5px">350 dpi</span><span class="t" style="left:172.5px">33 %</span><span class="t" style="left:198.5px">( -375, 189 )</span></div>

<!-- taskbar -->
<div class="a" style="left:0;top:546px;width:1024px;height:30px;background:#ececec"></div>
<div class="a" style="left:294px;top:546px;width:36px;height:30px;background:#f6f6f6"></div>
<svg class="a" style="left:0;top:546px" width="1024" height="30">
<g fill="#111"><rect x="12" y="9" width="6" height="5.5"/><rect x="18.8" y="8.3" width="6" height="6.2"/><rect x="12" y="15.3" width="6" height="5.5"/><rect x="18.8" y="15.3" width="6" height="6.2"/></g>
<circle cx="56" cy="12.5" r="4.3" fill="none" stroke="#222" stroke-width="1.2"/><path d="M53 15.5 L48.5 20.5" stroke="#222" stroke-width="1.4"/>
<g fill="none" stroke="#222" stroke-width="1.1"><rect x="85.5" y="11.5" width="8" height="7"/><path d="M84 9.5 H95 M84 20.5 H95"/></g><rect x="95.5" y="12" width="1.2" height="6" fill="#222"/>
<circle cx="128" cy="15" r="9" fill="#1577d0"/><path d="M119.5 13 Q121 6 128 6 Q135 6 137 13 Q137 17 133 18 Q129 18.5 129 16 Q130 13 133 13 Q128 9 123 11 Q120 12.5 119.5 13Z" fill="#41c77a"/><path d="M124 17 Q124 12.5 129 12 Q134 12 135 15.5 Q131 14.5 130 16.5 Q130 19 135 19.5 Q131 22 127.5 21 Q124 20 124 17Z" fill="#fff"/><rect x="156" y="8.5" width="16" height="13" rx="1" fill="#f7c243"/><rect x="156" y="6.5" width="7" height="3" fill="#e9a82e"/><path d="M160.5 21.5 V16 H167.5 V21.5" fill="none" stroke="#2a78c8" stroke-width="2.2"/>
<path d="M196.5 9 V7 Q196.5 4.5 201.5 4.5 Q206.5 4.5 206.5 7 V9" fill="none" stroke="#333" stroke-width="1.3"/><rect x="193" y="8.5" width="17" height="15" rx="1.5" fill="#2d2d2d"/><rect x="197" y="12" width="4" height="4" fill="#f25022"/><rect x="202" y="12" width="4" height="4" fill="#7fba00"/><rect x="197" y="17" width="4" height="4" fill="#00a4ef"/><rect x="202" y="17" width="4" height="4" fill="#ffb900"/>
<rect x="303" y="6" width="17" height="17" rx="2" fill="#f3f3f3"/><path d="M311.5 8 Q316.5 12 317 15.5 A5.5 5.5 0 0 1 306 15.5 Q306.5 12 311.5 8Z" fill="#22b89a"/><path d="M311.5 8 Q306.5 12 306 15 Q308 12.5 311 12.5 Q313 11 314 10Z" fill="#e24a3a"/><path d="M308.5 15 Q311 13 314 14.5 Q315 17 312.5 18.5 Q309.5 19 308.5 15Z" fill="#2a8fd0"/>
<rect x="339.5" y="6" width="18" height="18" rx="2.5" fill="#1c1c1c"/><path d="M342.5 12.5 Q345.5 12 348 15.5 Q351 12.5 354.5 12.5 Q351.5 14 350 17.5 Q348.5 18.5 347 17 Q345.5 14 342.5 12.5Z" fill="#f2f2f2"/>
<rect x="260" y="28" width="24" height="2" fill="#2a78c8"/><rect x="294" y="28" width="36" height="2" fill="#2a78c8"/><rect x="334" y="28" width="30" height="2" fill="#2a78c8"/>
<path d="M846.5 17.5 L851 13 L855.5 17.5" fill="none" stroke="#222" stroke-width="1.1"/>
<rect x="863.5" y="12.5" width="10" height="6" fill="none" stroke="#222"/><rect x="873.5" y="14" width="1.5" height="3" fill="#222"/><rect x="865" y="14" width="3.5" height="3" fill="#222"/>
<rect x="884" y="11" width="6" height="8" rx="1" fill="none" stroke="#222"/><path d="M883 9.5 H891 M883 20.5 H891" stroke="#222"/><rect x="890.5" y="13" width="1.5" height="4" fill="#222"/>
<path d="M901.5 21 A9 9 0 0 1 910.5 12 M903.5 21 A7 7 0 0 1 910.5 14 M905.5 21 A5 5 0 0 1 910.5 16 M907.5 21 A3 3 0 0 1 910.5 18" fill="none" stroke="#222" stroke-width="0.9"/>
<path d="M917 12.5 H919.5 L923 9.5 V20.5 L919.5 17.5 H917Z" fill="none" stroke="#222" stroke-width="1"/><path d="M925 12.5 Q926.5 15 925 17.5 M927 11 Q929.5 15 927 19" fill="none" stroke="#222" stroke-width="0.9"/>
<path d="M993.5 9.5 H1005.5 V18.5 H1001 L999 20.5 L997.5 18.5 H993.5Z" fill="none" stroke="#222" stroke-width="1.1"/>
</svg>
<div class="a" style="left:230px;top:552px;width:17px;height:17px;border-radius:50%;background:conic-gradient(from -60deg,#db4437 0 120deg,#f4c20d 120deg 240deg,#0f9d58 240deg 360deg)"></div>
<div class="a" style="left:234px;top:556px;width:9px;height:9px;border-radius:50%;background:#4285f4;border:1.6px solid #fff"></div>
<div class="a" style="left:268px;top:551px;width:17px;height:17px;border-radius:50%;background:conic-gradient(from -60deg,#db4437 0 120deg,#f4c20d 120deg 240deg,#0f9d58 240deg 360deg)"></div>
<div class="a" style="left:272px;top:555px;width:9px;height:9px;border-radius:50%;background:#4285f4;border:1.6px solid #fff"></div>
<div class="a" style="left:276px;top:559px;width:11px;height:11px;border-radius:50%;background:#c9a0e8;border:1.5px solid #a77fd6"></div>
<div class="a" style="left:279px;top:562px;width:5px;height:6px;background:#e0b060;border-radius:1px"></div>
<div class="t" style="left:940px;top:550px;font-size:8.4px;color:#1a1a1a">12:31 CH</div>
<div class="t" style="left:936px;top:563px;font-size:8.6px;color:#1a1a1a">27/08/2021</div>
</body></html>
